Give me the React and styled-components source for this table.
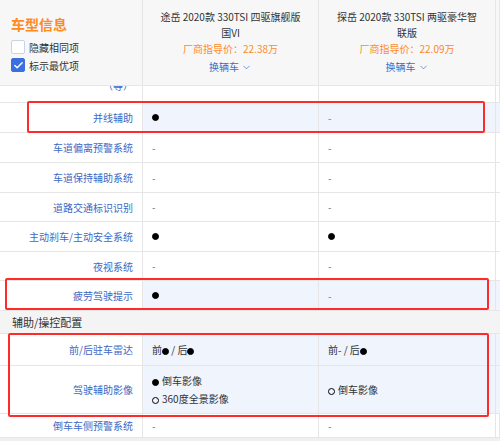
import React from 'react';
import styled, { createGlobalStyle } from 'styled-components';
import { ChevronDown, Check } from 'lucide-react';

const GlobalStyle = createGlobalStyle`
  html, body {
    margin: 0;
    padding: 0;
    background: #fff;
  }
`;

const Page = styled.div`
  position: relative;
  width: 500px;
  height: 441px;
  overflow: hidden;
  display: flex;
  flex-direction: column;
  background: #fff;
  font-family: "Noto Sans CJK SC", "Noto Sans", sans-serif;
`;

const Row = styled.div`
  display: grid;
  grid-template-columns: 143px 176px 177px 1fr;
  flex: none;
  height: ${p => p.$h}px;
  box-sizing: border-box;
  border-bottom: 1px solid #e6e6e6;
  background: ${p => (p.$head ? '#f7f7f7' : '#fff')};
`;

const Cell = styled.div`
  box-sizing: border-box;
  border-right: 1px solid #e6e6e6;
  min-width: 0;
  overflow: hidden;
`;

const Label = styled(Cell)`
  display: flex;
  align-items: ${p => (p.$clip ? 'flex-end' : 'center')};
  justify-content: flex-end;
  padding: ${p => (p.$clip ? '0 9px 8px 0' : '0 9px 0 0')};
  font-size: 10px;
  line-height: 17px;
  color: #4068c4;
  text-align: right;
  white-space: nowrap;
`;

const Value = styled(Cell)`
  display: flex;
  flex-direction: column;
  justify-content: center;
  gap: 2px;
  padding-left: 9px;
  font-size: 10px;
  line-height: 16px;
  color: #333;
  background: ${p => (p.$hl ? '#f0f4fc' : 'transparent')};
`;

const Dash = styled.span`
  color: #777;
`;

const Dot = styled.span`
  display: inline-block;
  width: 7px;
  height: 7px;
  border-radius: 50%;
  box-sizing: border-box;
  vertical-align: -1px;
  background: ${p => (p.$hollow ? 'transparent' : '#000')};
  border: 1px solid #000;
  margin-right: ${p => (p.$gap ? 3 : 0)}px;
`;

const InfoCell = styled(Cell)`
  display: flex;
  flex-direction: column;
  padding: 16px 0 0 11px;
`;

const InfoTitle = styled.div`
  font-size: 14px;
  font-weight: 700;
  line-height: 16px;
  color: #ff8a1f;
  margin-bottom: 6px;
`;

const Option = styled.label`
  display: flex;
  align-items: center;
  gap: 4px;
  height: 18px;
  font-size: 10px;
  color: #333;
`;

const Box = styled.span`
  display: inline-flex;
  align-items: center;
  justify-content: center;
  width: 14px;
  height: 14px;
  box-sizing: border-box;
  border-radius: 2px;
  border: 1px solid ${p => (p.$on ? '#3a6fe0' : '#c9d3e6')};
  background: ${p => (p.$on ? '#3a6fe0' : '#fff')};
  color: #fff;
`;

const CarCell = styled(Cell)`
  display: flex;
  flex-direction: column;
  align-items: center;
  padding: 9px 14px 0;
  text-align: center;
  font-size: 10px;
  line-height: 16px;
  color: #333;
`;

const Price = styled.div`
  color: #ff8a1f;
`;

const Switch = styled.div`
  display: flex;
  align-items: center;
  gap: 2px;
  margin-top: 2px;
  color: #3a6fd0;
`;

const Section = styled.div`
  flex: none;
  height: 23px;
  box-sizing: border-box;
  display: flex;
  align-items: center;
  padding-left: 12px;
  background: #f4f4f4;
  border-bottom: 1px solid #e6e6e6;
  font-size: 11px;
  color: #333;
`;

const Footer = styled.div`
  flex: 1;
  background: #f0f0f0;
`;

const Mark = styled.div`
  position: absolute;
  left: ${p => p.$x}px;
  top: ${p => p.$y}px;
  width: ${p => p.$w}px;
  height: ${p => p.$h}px;
  box-sizing: border-box;
  border: 2px solid #ff2b2b;
  border-radius: 2px;
  pointer-events: none;
`;

const none = <Dash>-</Dash>;
const yes = <Dot />;

const rows = [
  { label: '并线辅助', a: yes, b: none, h: 30, hl: true },
  { label: '车道偏离预警系统', a: none, b: none, h: 30 },
  { label: '车道保持辅助系统', a: none, b: none, h: 30 },
  { label: '道路交通标识识别', a: none, b: none, h: 29 },
  { label: '主动刹车/主动安全系统', a: yes, b: yes, h: 30 },
  { label: '夜视系统', a: none, b: none, h: 29 },
  { label: '疲劳驾驶提示', a: yes, b: none, h: 30, hl: true },
];

const cars = [
  { name: '途岳 2020款 330TSI 四驱旗舰版 国VI', price: '22.38万' },
  { name: '探岳 2020款 330TSI 两驱豪华智联版', price: '22.09万' },
];

export default function App() {
  return (
    <Page>
      <GlobalStyle />
      <Row $h={86} $head>
        <InfoCell>
          <InfoTitle>车型信息</InfoTitle>
          <Option>
            <Box />
            隐藏相同项
          </Option>
          <Option>
            <Box $on>
              <Check size={11} strokeWidth={3} />
            </Box>
            标示最优项
          </Option>
        </InfoCell>
        {cars.map(car => (
          <CarCell key={car.name}>
            <div>{car.name}</div>
            <Price>厂商指导价：{car.price}</Price>
            <Switch>
              换辆车
              <ChevronDown size={11} strokeWidth={1.5} />
            </Switch>
          </CarCell>
        ))}
        <Cell />
      </Row>

      <Row $h={17}>
        <Label $clip>（等）</Label>
        <Value />
        <Value />
        <Cell />
      </Row>

      {rows.map(r => (
        <Row key={r.label} $h={r.h}>
          <Label>{r.label}</Label>
          <Value $hl={r.hl}>{r.a}</Value>
          <Value $hl={r.hl}>{r.b}</Value>
          <Value $hl={r.hl} />
        </Row>
      ))}

      <Section>辅助/操控配置</Section>

      <Row $h={32}>
        <Label>前/后驻车雷达</Label>
        <Value $hl>
          <div>
            前<Dot /> / 后<Dot />
          </div>
        </Value>
        <Value $hl>
          <div>
            前- / 后<Dot />
          </div>
        </Value>
        <Value $hl />
      </Row>

      <Row $h={48}>
        <Label>驾驶辅助影像</Label>
        <Value $hl>
          <div>
            <Dot $gap />
            倒车影像
          </div>
          <div>
            <Dot $hollow $gap />
            360度全景影像
          </div>
        </Value>
        <Value $hl>
          <div>
            <Dot $hollow $gap />
            倒车影像
          </div>
        </Value>
        <Value $hl />
      </Row>

      <Row $h={24}>
        <Label>倒车车侧预警系统</Label>
        <Value>{none}</Value>
        <Value>{none}</Value>
        <Cell />
      </Row>

      <Footer />

      <Mark $x={27} $y={101} $w={458} $h={32} />
      <Mark $x={5} $y={278} $w={484} $h={32} />
      <Mark $x={8} $y={333} $w={481} $h={84} />
    </Page>
  );
}
